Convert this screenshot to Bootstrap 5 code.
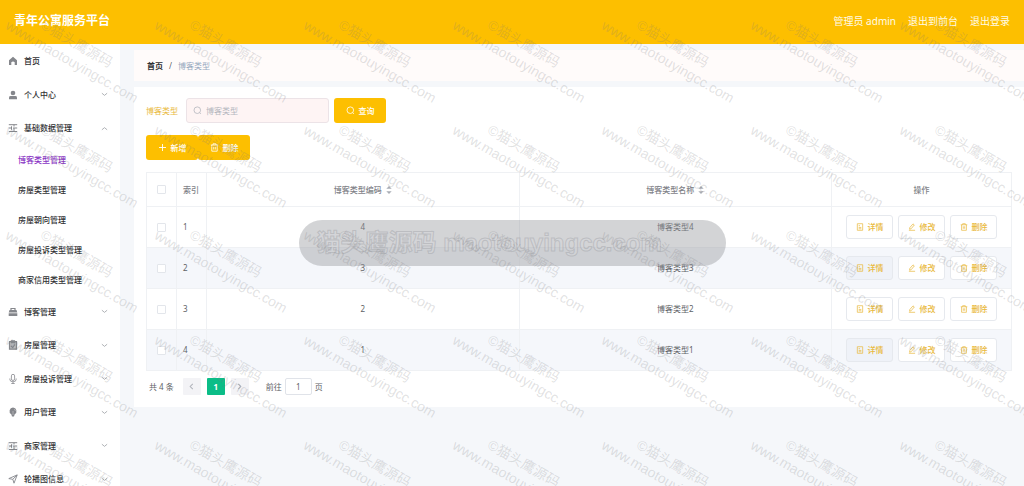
<!DOCTYPE html>
<html lang="zh-CN">
<head>
<meta charset="utf-8">
<meta name="viewport" content="width=device-width, initial-scale=1">
<title>青年公寓服务平台</title>
<link href="https://cdn.jsdelivr.net/npm/bootstrap@5.3.0/dist/css/bootstrap.min.css" rel="stylesheet">
<style>
:root{--gold:#fdbf00;--gold-text:#e9b93c;--ink:#303133;--line:#eff1f4}
body{font-family:"Noto Sans","Noto Sans CJK SC",sans-serif;font-size:8px;line-height:12px;color:#606266;background:#f5f7fa;min-height:100vh}
.page{position:relative;height:100vh;overflow:hidden}
a{text-decoration:none;color:inherit}
svg{fill:none;stroke:currentColor;stroke-width:1.2;flex:none}
.topbar{background:var(--gold);height:44px;padding:0 14px 2px 14px;color:#fff;flex:none}
.topbar h1{font-size:12px;line-height:18px;font-weight:700}
.topbar nav{font-size:10px;line-height:16px;gap:12px;color:#fffbe8}
.side{width:120px;background:#fff;flex:none;color:var(--ink)}
.side>ul>li>a{height:33px;padding:0 12px 0 8px;gap:6px;font-weight:500}
.side>ul>li:nth-child(odd)>a{height:34px}
.side svg.mi{color:#85878c}
.side svg.arr{color:#a5a8ad;stroke-width:1}
.side .sub a{height:30px;padding-left:18px;font-weight:500}
.side .sub a.on{color:#8a35c4}
.work{padding:6px 0 0 14px;gap:6px;min-width:0}
.crumbs{background:#fffbfa;height:31px;padding:0 13px;--bs-breadcrumb-divider-color:#909399}
.crumbs li{display:flex}
.crumbs .breadcrumb-item+.breadcrumb-item{padding-left:6px;color:#97a8be}
.crumbs .breadcrumb-item+.breadcrumb-item::before{padding-right:6px}
.crumbs a{color:var(--ink);font-weight:600}
.panel{background:#fff;padding:11px 12px}
.panel label{color:var(--gold-text)}
.find{width:143px;height:25px;margin:0 5px 0 8px;background:#fef4f4;border:1px solid #ece3e7;border-radius:3px;padding:0 6px;gap:4px;color:#b4b6be}
.find input{border:0;background:none;outline:0;padding:0;min-width:0;width:100%;color:#606266}
.find input::placeholder{color:#b4b6be;opacity:1}
.btn{font-size:8px;line-height:12px;padding:0;display:flex;align-items:center;justify-content:center;gap:4px;border-radius:3px}
.btn-gold,.btn-gold:hover{background:var(--gold);color:#fff;width:52px;height:25px;border:0;font-weight:500}
.tools{margin-top:12px}
.btn-row{width:47px;height:24px;background:#fff;border:1px solid #e6e9ee;color:var(--gold-text);font-weight:500}
.list{margin:12px 0 7px;table-layout:fixed;width:100%;border:1px solid var(--line);border-collapse:collapse;text-align:center}
.list th,.list td{border:1px solid var(--line);padding:0 6px;height:41px;vertical-align:middle}
.list th{height:34px;color:#7f8288;font-weight:500}
.list tbody tr:nth-child(even){background:#f5f7fb}
.list tbody tr:nth-child(even) .btn-row:first-child{background:#eff2f8}
.list th:nth-child(2),.list td:nth-child(2){text-align:left}
.list input{appearance:none;width:9px;height:9px;border:1px solid #e3e6eb;border-radius:1px;background:#fff;display:block;margin:auto}
.list svg{vertical-align:-2px}
.list th svg{margin-left:2px}
.pager{height:17px;padding-left:3px;margin-bottom:1px}
.pages{gap:6px;margin:0 17px 0 9px}
.pager button{width:18px;height:17px;border:0;border-radius:1px;padding:0;background:#f3f3f6;color:#b1b4bb;display:flex;align-items:center;justify-content:center}
.pager button.now{background:#0bbd87;color:#fff;font-weight:700}
.pager input{width:27px;height:17px;border:1px solid #e0e3e9;border-radius:2px;text-align:center;padding:0;color:#606266;margin:0 3px}
.pager label{color:#606266}
.veil{position:absolute;inset:0;overflow:hidden;pointer-events:none;display:grid;grid-template-columns:repeat(auto-fill,149px);grid-auto-rows:105px;font-family:"Liberation Sans","Noto Sans CJK SC",sans-serif;color:rgba(120,120,125,.22);width:calc(100% + 149px)}
.veil div{padding:20px 0 0 7px;white-space:nowrap}
.veil p{margin:0;transform:rotate(30deg);transform-origin:0 50%;font-size:14px;line-height:8px}
.veil p:first-child{margin-left:37px;height:0}
.stamp{position:absolute;top:220px;left:0;right:0;margin:auto;width:427px;height:46px;border-radius:23px;background:rgba(145,147,153,.4);padding-left:18px;line-height:46px;font-size:24px;font-weight:700;font-family:"Liberation Sans","Noto Sans CJK SC",sans-serif;color:rgba(215,216,220,.4);-webkit-text-stroke:1px rgba(145,147,152,.36);white-space:nowrap;pointer-events:none}
</style>
<script src="https://cdn.jsdelivr.net/npm/bootstrap@5.3.0/dist/js/bootstrap.bundle.min.js"></script>
</head>
<body>
<svg width="0" height="0" class="position-absolute">
<symbol id="down" viewBox="0 0 8 8"><path d="M1 2.5 4 5l3-2.5"/></symbol>
<symbol id="up" viewBox="0 0 8 8"><path d="M1 5.5 4 3l3 2.5"/></symbol>
<symbol id="home" viewBox="0 0 10 10"><path fill="currentColor" stroke="none" d="M5 .8 1 4.2V9h2.3V6.3Q5 4.5 6.7 6.3V9H9V4.2z"/></symbol>
<symbol id="user" viewBox="0 0 10 10"><g fill="currentColor" stroke="none"><circle cx="5" cy="3" r="2.3"/><path d="M1 9.2V7.4Q1 6 2.7 6h4.6Q9 6 9 7.4v1.8z"/></g></symbol>
<symbol id="rows" viewBox="0 0 10 10"><path stroke-width="1" d="M.8 1.7h8.4M.8 8.5h8.4M5 5h4.2M.8 5H3M3.5 3.3v3.5M6 1.7v1.8M6 5v3.5"/></symbol>
<symbol id="case" viewBox="0 0 10 10"><path d="M3 3V1.5h4V3"/><path fill="currentColor" stroke="none" d="M1.5 3h7l.8 2.5H.7zM.7 6.2h8.6V9H.7z"/></symbol>
<symbol id="clip" viewBox="0 0 10 10"><path fill="#b9bbbf" d="M1.5 1.7h7v7.5h-7zM3.5.8h3v1.8h-3z"/><path d="M3 6 4.7 7.5 7 4.4"/></symbol>
<symbol id="mic" viewBox="0 0 10 10"><path stroke-width=".8" d="M3.4 1.9a1.6 1.6 0 0 1 3.2 0v3a1.6 1.6 0 0 1-3.2 0zM1.8 4.5v.7a3.2 2.6 0 0 0 6.4 0v-.7M5 7.8v1.6M3.3 9.5h3.4"/></symbol>
<symbol id="bulb" viewBox="0 0 10 10"><path fill="currentColor" stroke="none" d="M5 .5A3.6 3.6 0 0 0 3.3 7.2L4 9.5h2l.7-2.3A3.6 3.6 0 0 0 5 .5"/><path stroke="#ccc" stroke-width=".6" d="M5 4v4M6 2q1.4.6 1.4 2"/></symbol>
<symbol id="send" viewBox="0 0 10 10"><path stroke-width=".9" d="M.8 4.6 9.2.9 6 9.2 4.8 5.3zM4.8 5.3 9.2.9"/></symbol>
<symbol id="lens" viewBox="0 0 9 9"><circle cx="4.3" cy="4.2" r="3.3" stroke-width=".8"/><path stroke-width=".8" d="m6.7 6.6 1.2 1.3"/></symbol>
<symbol id="plus" viewBox="0 0 9 9"><path stroke-width=".9" d="M4.5 1v7M1 4.5h7"/></symbol>
<symbol id="bin" viewBox="0 0 9 9"><path stroke-width=".8" d="M.8 2h7.4M3 2V.8h3V2M1.8 2v6.2h5.4V2M3.7 3.7v2.8M5.3 3.7v2.8"/></symbol>
<symbol id="doc" viewBox="0 0 9 9"><path stroke-width=".8" d="M1.5.8h6v7.4h-6zM3 5h3M3 6.5h3M3 3h1.5"/></symbol>
<symbol id="pen" viewBox="0 0 9 9"><path stroke-width=".8" d="M2 5.2 5.6 1l1.5 1.2L3.6 6.4 1.8 7zM1 8.2h7"/></symbol>
<symbol id="sort" viewBox="0 0 6 10"><path fill="#a9adb5" stroke="none" d="M.3 3.8 3 .9 5.7 3.8zM.3 6.2 3 9.1 5.7 6.2z"/></symbol>
</svg>
<div class="page d-flex flex-column">
<header class="topbar d-flex align-items-center justify-content-between">
<h1 class="m-0">青年公寓服务平台</h1>
<nav class="d-flex"><span>管理员 admin</span><a href="#">退出到前台</a><a href="#">退出登录</a></nav>
</header>
<div class="d-flex flex-grow-1">
<aside class="side"><ul class="list-unstyled m-0" id="menu"></ul></aside>
<main class="work flex-grow-1 d-flex flex-column">
<nav class="crumbs d-flex align-items-center"><ol class="breadcrumb m-0"><li class="breadcrumb-item"><a href="#">首页</a></li><li class="breadcrumb-item">博客类型</li></ol></nav>
<section class="panel">
<form class="d-flex align-items-center mb-0" onsubmit="return false">
<label for="kind">博客类型</label>
<div class="find d-flex align-items-center"><svg width="9" height="9"><use href="#lens"/></svg><input id="kind" type="text" placeholder="博客类型"></div>
<button class="btn btn-gold"><svg width="9" height="9"><use href="#lens"/></svg>查询</button>
</form>
<div class="tools d-flex"><button class="btn btn-gold"><svg width="9" height="9"><use href="#plus"/></svg>新增</button><button class="btn btn-gold"><svg width="9" height="9"><use href="#bin"/></svg>删除</button></div>
<table class="list">
<colgroup><col style="width:30px"><col style="width:30px"><col><col><col style="width:180px"></colgroup>
<thead><tr><th><input type="checkbox" aria-label="全选"></th><th>索引</th><th>博客类型编码 <svg width="6" height="10"><use href="#sort"/></svg></th><th>博客类型名称 <svg width="6" height="10"><use href="#sort"/></svg></th><th>操作</th></tr></thead>
<tbody id="rows-body"></tbody>
</table>
<div class="pager d-flex align-items-center"><span>共 4 条</span>
<div class="pages d-flex"><button aria-label="上一页"><svg width="7" height="7" viewBox="0 0 8 8"><path d="M5.5 1 2.5 4l3 3"/></svg></button><button class="now">1</button><button aria-label="下一页"><svg width="7" height="7" viewBox="0 0 8 8"><path d="m2.5 1 3 3-3 3"/></svg></button></div>
<label for="goto">前往</label><input id="goto" type="text" value="1"><span>页</span></div>
</section>
</main>
</div>
<div class="stamp">猫头鹰源码 maotouyingcc.com</div>
<div class="veil" id="veil" aria-hidden="true"></div>
</div>
<script>
const icon=(n,s,c='')=>`<svg class="${c}" width="${s}" height="${s}"><use href="#${n}"/></svg>`;
const sub=['博客类型管理','房屋类型管理','房屋朝向管理','房屋投诉类型管理','商家信用类型管理'];
const items=[['home','首页'],['user','个人中心'],['rows','基础数据管理'],['case','博客管理'],['clip','房屋管理'],['mic','房屋投诉管理'],['bulb','用户管理'],['rows','商家管理'],['send','轮播图信息']];
document.getElementById('menu').innerHTML=items.map(([i,t],k)=>`<li><a href="#" class="d-flex align-items-center">${icon(i,10,'mi')}<span class="flex-grow-1">${t}</span>${k?icon(k==2?'up':'down',7,'arr'):''}</a>${k==2?'<div class="sub">'+sub.map((s,j)=>`<a href="#" class="d-flex align-items-center ${j?'':'on'}">${s}</a>`).join('')+'</div>':''}</li>`).join('');
document.getElementById('rows-body').innerHTML=[4,3,2,1].map((n,i)=>`<tr><td><input type="checkbox" aria-label="选择 ${i+1}"></td><td>${i+1}</td><td>${n}</td><td>博客类型${n}</td><td><div class="d-flex justify-content-center" style="gap:5px">${[['doc','详情'],['pen','修改'],['bin','删除']].map(([a,b])=>`<button class="btn btn-row">${icon(a,8)}${b}</button>`).join('')}</div></td></tr>`).join('');
const veil=document.getElementById('veil');
const count=Math.floor(veil.offsetWidth/149)*Math.ceil(innerHeight/105);
veil.innerHTML='<div><p>©猫头鹰源码</p><p>www.maotouyingcc.com</p></div>'.repeat(count);
</script>
</body>
</html>
